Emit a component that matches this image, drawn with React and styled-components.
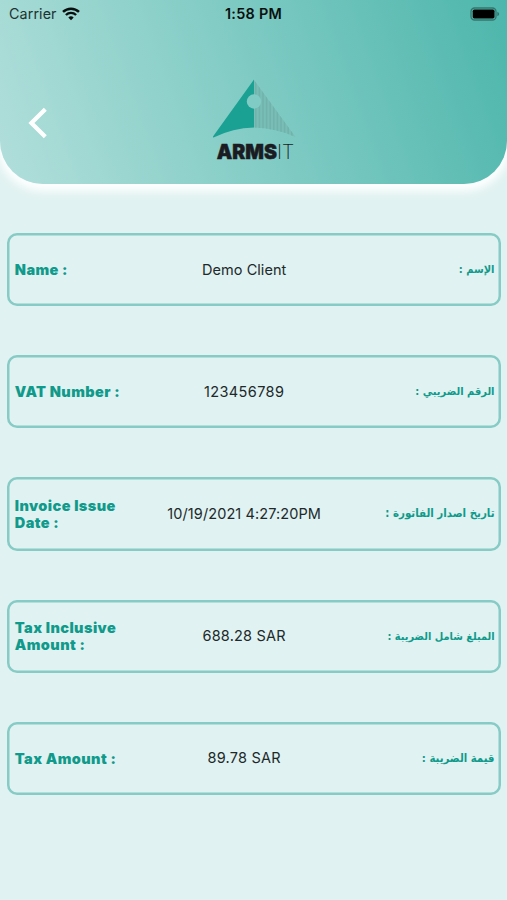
import React from 'react';
import styled, { createGlobalStyle } from 'styled-components';

const GlobalStyle = createGlobalStyle`
  * { box-sizing: border-box; }
  body {
    margin: 0;
    background: #e0f2f1;
    font-family: Inter, "Liberation Sans", sans-serif;
  }
`;

const Screen = styled.div`
  min-height: 900px;
  background: #e0f2f1;
  overflow: hidden;
`;

const Header = styled.header`
  height: 184px;
  border-radius: 0 0 43px 43px;
  background: linear-gradient(70deg, #b2dfdb 0%, #80cbc4 50%, #4db6ac 100%);
  box-shadow: 0 4px 10px 3px #ffffff;
`;

const StatusBar = styled.div`
  display: grid;
  grid-template-columns: 1fr auto 1fr;
  align-items: center;
  height: 27px;
  padding: 0 7px 0 9px;
  color: #08100f;
`;

const Carrier = styled.div`
  display: flex;
  align-items: center;
  gap: 5px;
  font-size: 14.3px;
  letter-spacing: 0.1px;
  color: #1d3330;
`;

const Clock = styled.div`
  margin: 0 1px 0 -1px;
  font-size: 14.4px;
  font-weight: 600;
  letter-spacing: 0.3px;
`;

const Battery = styled.svg`
  justify-self: end;
  display: block;
`;

const NavBar = styled.div`
  display: grid;
  grid-template-columns: 1fr 90px 1fr;
  align-items: start;
  padding: 52px 20px 0 28px;
`;

const BackButton = styled.button`
  width: 20px;
  height: 32px;
  margin-top: 28px;
  padding: 0;
  border: 0;
  background: none;
  svg { display: block; }
`;

const Logo = styled.div`
  display: flex;
  flex-direction: column;
  align-items: center;
  margin-left: -4px;
  margin-right: 4px;
`;

const LogoName = styled.div`
  display: flex;
  align-items: baseline;
  margin-top: 2px;
  margin-left: 4px;
  font-size: 19.5px;
  line-height: 23px;
  color: #1b1b22;
`;

const LogoBold = styled.span`
  font-weight: 900;
  letter-spacing: 0;
  -webkit-text-stroke: 0.5px #1b1b22;
`;

const LogoThin = styled.span`
  font-weight: 200;
`;

const Fields = styled.main`
  display: flex;
  flex-direction: column;
  gap: 49px;
  padding: 49px 6px 0 7px;
`;

const Field = styled.section`
  display: grid;
  grid-template-columns: 120px 1fr 141px;
  align-items: center;
  height: 73.2px;
  padding: 0 6.5px 0 7.8px;
  border-radius: 10px;
  box-shadow: inset 0 0 0 2.5px #86cbc5;
`;

const Label = styled.div`
  font-size: 14.5px;
  font-weight: 900;
  line-height: 17px;
  letter-spacing: 0.42px;
  color: #109a8b;
`;

const Value = styled.div`
  font-size: 14.5px;
  line-height: 18px;
  letter-spacing: ${({ $spacing }) => $spacing}px;
  text-align: center;
  white-space: nowrap;
  color: #20292a;
`;

const ArabicLabel = styled.div`
  font-family: "DejaVu Sans Condensed", "DejaVu Sans", sans-serif;
  font-stretch: condensed;
  font-size: ${({ $size }) => $size}px;
  font-weight: 700;
  line-height: 17px;
  white-space: nowrap;
  color: #109a8b;
`;

const fields = [
  { label: 'Name :', value: 'Demo Client', spacing: 0.05, arabic: 'الإسم :', size: 11 },
  { label: 'VAT Number :', value: '123456789', spacing: 0.4, arabic: 'الرقم الضريبي :', size: 11 },
  { label: 'Invoice Issue Date :', value: '10/19/2021 4:27:20PM', spacing: 0.1, arabic: 'تاريخ اصدار الفاتورة :', size: 11.4 },
  { label: 'Tax Inclusive Amount :', value: '688.28 SAR', spacing: 0.2, arabic: 'المبلغ شامل الضريبة :', size: 10.9 },
  { label: 'Tax Amount :', value: '89.78 SAR', spacing: 0.2, arabic: 'قيمة الضريبة :', size: 11.3 },
];

function WifiIcon() {
  return (
    <svg width="18" height="14" viewBox="0 0 18 14" fill="none" stroke="#08100f">
      <path d="M1 4.9C5.5.6 12.5.6 17 4.9" strokeWidth="2.5" />
      <path d="M3.9 8C6.8 5.2 11.2 5.2 14.1 8" strokeWidth="2.4" />
      <path d="M6.3 10.4Q9 8.1 11.7 10.4L9 13.3Z" fill="#08100f" stroke="none" />
    </svg>
  );
}

function BatteryIcon() {
  return (
    <Battery width="30" height="14" viewBox="0 0 30 14">
      <rect x="1" y="1" width="25" height="12" rx="3.6" fill="none" stroke="#34756e" strokeWidth="1.3" />
      <rect x="2.7" y="2.6" width="21.8" height="8.8" rx="1.6" fill="#000" />
      <path d="M27.3 4.7Q29.2 5.4 29.2 7T27.3 9.3Z" fill="#34756e" />
    </Battery>
  );
}

const stripes = Array.from({ length: 11 }, (_, i) => 44 + i * 3.6);

function LogoMark() {
  return (
    <svg width="86" height="60" viewBox="0 0 86 60">
      <defs>
        <clipPath id="sail">
          <path d="M43 1L84.5 58Q65 49 43 48.5Z" />
        </clipPath>
      </defs>
      <path d="M43 0.5V48.5Q22 49 2.5 58.5Q1.5 58.5 2 57.5Z" fill="#1aa193" />
      <g clipPath="url(#sail)">
        <rect x="42" width="44" height="60" fill="#7abdb7" />
        {stripes.map((x) => (
          <rect key={x} x={x} width="1.6" height="60" fill="#70b3ad" />
        ))}
      </g>
      <circle cx="43" cy="22.5" r="7.2" fill="#80cbc4" />
    </svg>
  );
}

export default function App() {
  return (
    <Screen>
      <GlobalStyle />
      <Header>
        <StatusBar>
          <Carrier>
            Carrier
            <WifiIcon />
          </Carrier>
          <Clock>1:58 PM</Clock>
          <BatteryIcon />
        </StatusBar>
        <NavBar>
          <BackButton aria-label="Back">
            <svg width="20" height="32" viewBox="0 0 20 32" fill="none" stroke="#fff" strokeWidth="4.2">
              <path d="M17.3 2.3L3.4 16L17.3 29.7" />
            </svg>
          </BackButton>
          <Logo>
            <LogoMark />
            <LogoName>
              <LogoBold>ARMS</LogoBold>
              <LogoThin>IT</LogoThin>
            </LogoName>
          </Logo>
        </NavBar>
      </Header>
      <Fields>
        {fields.map(({ label, value, spacing, arabic, size }) => (
          <Field key={label}>
            <Label>{label}</Label>
            <Value $spacing={spacing}>{value}</Value>
            <ArabicLabel dir="rtl" lang="ar" $size={size}>{arabic}</ArabicLabel>
          </Field>
        ))}
      </Fields>
    </Screen>
  );
}
